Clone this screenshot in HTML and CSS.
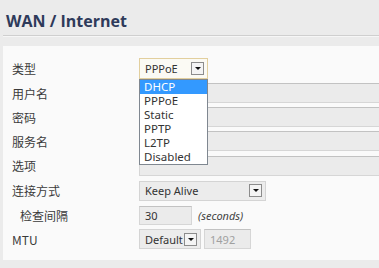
FILE: index.html
```html
<!DOCTYPE html>
<html>
<head>
  <title>WAN / Internet</title>
  <link rel="stylesheet" href="styles.css">
</head>
<body>

  <h1 class="page-title">WAN / Internet</h1>

  <div class="panel">
    <div class="row row-first">
      <label class="label">类型</label>
      <div class="select-wrap">
        <div class="select select-focus select-type">
          <span class="select-text">PPPoE</span>
          <span class="arrow"></span>
        </div>
        <ul class="dropdown">
          <li class="active">DHCP</li>
          <li>PPPoE</li>
          <li>Static</li>
          <li>PPTP</li>
          <li>L2TP</li>
          <li>Disabled</li>
        </ul>
      </div>
    </div>

    <div class="row">
      <label class="label">用户名</label>
      <input type="text" class="field field-wide">
    </div>

    <div class="row">
      <label class="label">密码</label>
      <input type="password" class="field field-wide">
    </div>

    <div class="row">
      <label class="label">服务名</label>
      <input type="text" class="field field-wide">
    </div>

    <div class="row row-tall">
      <label class="label">选项</label>
      <input type="text" class="field field-wide">
    </div>

    <div class="row row-tall">
      <label class="label">连接方式</label>
      <div class="select select-mode">
        <span class="select-text">Keep Alive</span>
        <span class="arrow"></span>
      </div>
    </div>

    <div class="row">
      <label class="label label-sub">检查间隔</label>
      <input type="text" class="field field-short" value="30">
      <span class="unit">(seconds)</span>
    </div>

    <div class="row">
      <label class="label">MTU</label>
      <div class="select select-mtu">
        <span class="select-text">Default</span>
        <span class="arrow"></span>
      </div>
      <input type="text" class="field field-mtu" value="1492" disabled>
    </div>
  </div>

</body>
</html>
```

FILE: styles.css
```css
body {
  margin: 0;
  background-color: #ebebeb;
  font-family: "Noto Sans", "Noto Sans CJK SC", sans-serif;
  font-size: 11px;
  color: #333;
  overflow: hidden;
}

.page-title {
  margin: 0 0 0 3px;
  padding: 11px 0 0 3px;
  height: 24px;
  font-family: "Open Sans", sans-serif;
  font-size: 16px;
  font-weight: bold;
  line-height: 20px;
  color: #2e3a5a;
  border-bottom: 1px solid #cfcfcf;
  box-shadow: 0 1px 0 #f6f6f6;
}

.panel {
  margin: 10px 0 0 3px;
  padding: 9px 0 9px 0;
  background-color: #fafafa;
}

.row {
  display: flex;
  align-items: center;
  height: 24px;
}

.row-first {
  height: 26px;
}

.row-tall {
  height: 25px;
}

.label {
  width: 127px;
  padding-left: 9px;
  flex-shrink: 0;
  font-family: "Noto Sans CJK SC", sans-serif;
  font-size: 12px;
  color: #3a3a3a;
}

.label-sub {
  width: 119px;
  padding-left: 17px;
}

.field {
  height: 20px;
  box-sizing: border-box;
  padding: 0 5px;
  border: 1px solid #d6d6d6;
  border-top-color: #c2c2c2;
  background-color: #ebebeb;
  font-family: "Noto Sans", sans-serif;
  font-size: 11px;
  color: #333;
  outline: none;
}

.field-wide {
  flex: 1;
  min-width: 0;
  border-right: none;
}

.field-short {
  width: 53px;
  height: 19px;
}

.field-mtu {
  width: 47px;
  margin-left: 3px;
  color: #a0a0a0;
}

.unit {
  margin-left: 6px;
  font-style: italic;
  color: #444;
}

.select-wrap {
  position: relative;
}

.select {
  display: flex;
  align-items: center;
  justify-content: space-between;
  height: 20px;
  box-sizing: border-box;
  padding: 0 3px 0 5px;
  border: 1px solid #d4d4d4;
  background-color: #ececec;
}

.select-focus {
  height: 21px;
  border-color: #e2cf9e;
  background-color: #fbfaf4;
}

.select-type {
  width: 69px;
}

.select-mode {
  width: 127px;
}

.select-mtu {
  width: 62px;
}

.arrow {
  position: relative;
  flex-shrink: 0;
  width: 11px;
  height: 11px;
  border: 1px solid #8c8c8c;
  background-color: #f4f4f4;
}

.arrow::after {
  content: "";
  position: absolute;
  left: 3px;
  top: 4px;
  border-left: 3px solid transparent;
  border-right: 3px solid transparent;
  border-top: 3px solid #111;
}

.dropdown {
  position: absolute;
  left: 0;
  top: 21px;
  width: 69px;
  box-sizing: border-box;
  margin: 0;
  padding: 0;
  list-style: none;
  border: 1px solid #7f8790;
  background-color: #fff;
  font-size: 11.5px;
}

.dropdown li {
  height: 14px;
  line-height: 14px;
  padding-left: 4px;
  color: #333;
}

.dropdown li.active {
  background-color: #3399ff;
  color: #fff;
}
```
